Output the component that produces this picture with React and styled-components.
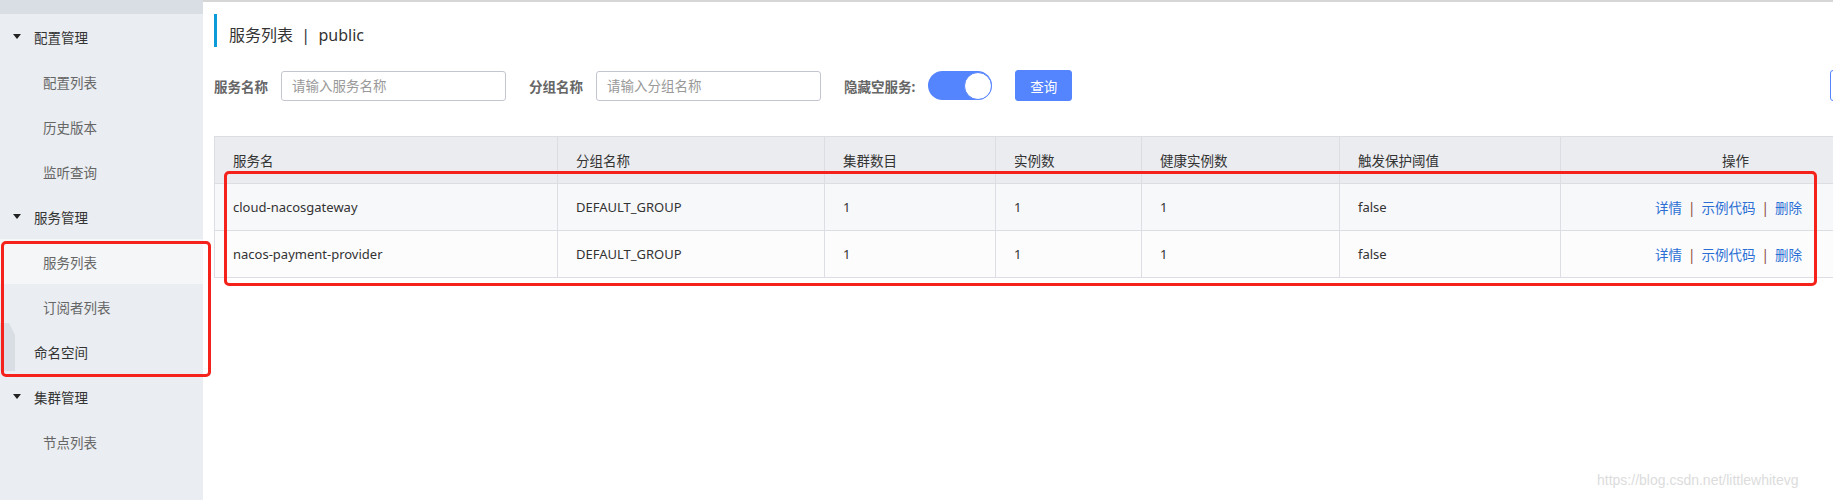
import React from 'react';
import styled, { createGlobalStyle } from 'styled-components';

const GlobalStyle = createGlobalStyle`
  html, body {
    margin: 0;
    padding: 0;
    width: 1833px;
    height: 500px;
    overflow: hidden;
    background: #fff;
  }
  body {
    font-family: "Noto Sans", "Noto Sans CJK SC", sans-serif;
    color: #333;
  }
  * { box-sizing: border-box; }
`;

const Page = styled.div`
  position: relative;
  display: flex;
  width: 1833px;
  height: 500px;
  overflow: hidden;
`;

const Sidebar = styled.div`
  flex: 0 0 203px;
  background: #eaedf1;
  display: flex;
  flex-direction: column;
  position: relative;
`;

const TopStrip = styled.div`
  height: 14px;
  background: #d9dee5;
`;

const MenuItem = styled.div`
  height: 45px;
  display: flex;
  align-items: center;
  gap: 13px;
  padding-left: ${props => (props.sub ? '43px' : props.caret ? '13px' : '34px')};
  font-size: 13.5px;
  color: ${props => (props.sub ? '#666' : '#333')};
  background: ${props => (props.active ? '#f4f6f8' : 'transparent')};
`;

const Caret = styled.span`
  width: 0;
  height: 0;
  border-left: 4px solid transparent;
  border-right: 4px solid transparent;
  border-top: 5px solid #222;
`;

const CollapseTab = styled.div`
  position: absolute;
  left: 0;
  top: 323px;
  width: 15px;
  height: 48px;
  background: #d9dee5;
  clip-path: polygon(0 0, 60% 0, 100% 25%, 100% 100%, 0 100%);
`;

const Main = styled.div`
  flex: 1;
  min-width: 0;
  border-top: 2px solid #d6d6d6;
  overflow: hidden;
`;

const Content = styled.div`
  width: 1696px;
  margin-left: 11px;
  display: flex;
  flex-direction: column;
`;

const TitleBar = styled.div`
  margin-top: 12px;
  height: 33px;
  border-left: 3px solid #0b9bd9;
  padding: 7px 0 0 12px;
  display: flex;
  align-items: center;
  font-size: 16px;
  color: #333;
  white-space: pre;
`;

const FormRow = styled.div`
  margin-top: 23px;
  height: 31px;
  display: flex;
  align-items: center;
`;

const Label = styled.span`
  font-size: 13.5px;
  font-weight: bold;
  color: #666;
  margin-right: 13px;
  white-space: nowrap;
`;

const TextInput = styled.input`
  width: 225px;
  height: 30px;
  border: 1px solid #c4c6cf;
  border-radius: 3px;
  padding: 0 10px;
  font-family: inherit;
  font-size: 13.5px;
  color: #333;
  margin-right: 23px;
  outline: none;
  &::placeholder { color: #999; }
`;

const Toggle = styled.div`
  width: 64px;
  height: 29px;
  border-radius: 15px;
  background: #5584ff;
  display: flex;
  align-items: center;
  justify-content: flex-end;
  margin-right: 23px;
`;

const Knob = styled.span`
  width: 28px;
  height: 28px;
  border-radius: 50%;
  background: #fff;
  border: 1px solid #5584ff;
`;

const Button = styled.button`
  height: 31px;
  width: ${props => props.w}px;
  border-radius: 3px;
  border: 1px solid #5584ff;
  background: ${props => (props.ghost ? '#fff' : '#5584ff')};
  color: ${props => (props.ghost ? '#5584ff' : '#fff')};
  font-family: inherit;
  font-size: 13.5px;
  padding: 0;
  margin-left: ${props => (props.push ? 'auto' : '0')};
`;

const TableWrap = styled.div`
  position: relative;
  margin-top: 35px;
`;

const Table = styled.table`
  width: 1696px;
  border-collapse: collapse;
  table-layout: fixed;
  font-size: 13px;
  color: #333;
`;

const Th = styled.th`
  height: 47px;
  background: #ebecf0;
  border: 1px solid #dcdee3;
  font-weight: normal;
  font-size: 13.5px;
  text-align: ${props => props.align || 'left'};
  padding: ${props => (props.align === 'center' ? '0' : '0 0 0 18px')};
  color: #333;
`;

const Row = styled.tr`
  background: ${props => (props.shade ? '#f7f8fa' : '#fcfcfd')};
`;

const Td = styled.td`
  height: 47px;
  border: 1px solid #dcdee3;
  padding: ${props => (props.actions ? '0 108px 0 0' : '0 0 0 18px')};
  text-align: ${props => (props.actions ? 'right' : 'left')};
  font-size: ${props => (props.actions ? '13.5px' : '13px')};
`;

const Link = styled.a`
  color: #2b6fd4;
  text-decoration: none;
`;

const Sep = styled.span`
  color: #8a4b3a;
  margin: 0 6px;
`;

const Annotation = styled.div`
  position: absolute;
  border: 3px solid #f5221c;
  border-radius: 5px;
  pointer-events: none;
`;

const SideMark = styled(Annotation)`
  left: 1px;
  top: 241px;
  width: 210px;
  height: 136px;
`;

const TableMark = styled(Annotation)`
  left: 10px;
  top: 35px;
  width: 1593px;
  height: 115px;
`;

const Watermark = styled.div`
  position: absolute;
  left: 1597px;
  top: 472px;
  font-family: "Liberation Sans", Arial, sans-serif;
  font-size: 14px;
  color: #dcdcdc;
  white-space: nowrap;
`;

const menu = [
  { label: '配置管理', caret: true },
  { label: '配置列表', sub: true },
  { label: '历史版本', sub: true },
  { label: '监听查询', sub: true },
  { label: '服务管理', caret: true },
  { label: '服务列表', sub: true, active: true },
  { label: '订阅者列表', sub: true },
  { label: '命名空间' },
  { label: '集群管理', caret: true },
  { label: '节点列表', sub: true },
];

const columns = [
  { title: '服务名', w: 343 },
  { title: '分组名称', w: 267 },
  { title: '集群数目', w: 171 },
  { title: '实例数', w: 146 },
  { title: '健康实例数', w: 198 },
  { title: '触发保护阈值', w: 221 },
  { title: '操作', w: 350, align: 'center' },
];

const services = [
  { name: 'cloud-nacosgateway', group: 'DEFAULT_GROUP', clusters: 1, instances: 1, healthy: 1, threshold: 'false' },
  { name: 'nacos-payment-provider', group: 'DEFAULT_GROUP', clusters: 1, instances: 1, healthy: 1, threshold: 'false' },
];

const App = () => (
  <Page>
    <GlobalStyle />
    <Sidebar>
      <TopStrip />
      {menu.map(m => (
        <MenuItem key={m.label} sub={m.sub} caret={m.caret} active={m.active}>
          {m.caret && <Caret />}
          {m.label}
        </MenuItem>
      ))}
      <CollapseTab />
    </Sidebar>

    <Main>
      <Content>
        <TitleBar>服务列表  |  public</TitleBar>

        <FormRow>
          <Label>服务名称</Label>
          <TextInput placeholder="请输入服务名称" />
          <Label>分组名称</Label>
          <TextInput placeholder="请输入分组名称" />
          <Label>隐藏空服务:</Label>
          <Toggle><Knob /></Toggle>
          <Button w={57}>查询</Button>
          <Button w={80} ghost push aria-label="创建服务" />
        </FormRow>

        <TableWrap>
          <Table>
            <colgroup>
              {columns.map(c => <col key={c.title} style={{ width: c.w }} />)}
            </colgroup>
            <thead>
              <tr>
                {columns.map(c => <Th key={c.title} align={c.align}>{c.title}</Th>)}
              </tr>
            </thead>
            <tbody>
              {services.map((s, i) => (
                <Row key={s.name} shade={i === 0}>
                  <Td>{s.name}</Td>
                  <Td>{s.group}</Td>
                  <Td>{s.clusters}</Td>
                  <Td>{s.instances}</Td>
                  <Td>{s.healthy}</Td>
                  <Td>{s.threshold}</Td>
                  <Td actions>
                    <Link>详情</Link>
                    <Sep>|</Sep>
                    <Link>示例代码</Link>
                    <Sep>|</Sep>
                    <Link>删除</Link>
                  </Td>
                </Row>
              ))}
            </tbody>
          </Table>
          <TableMark />
        </TableWrap>
      </Content>
    </Main>

    <SideMark />
    <Watermark>https://blog.csdn.net/littlewhitevg</Watermark>
  </Page>
);

export default App;
